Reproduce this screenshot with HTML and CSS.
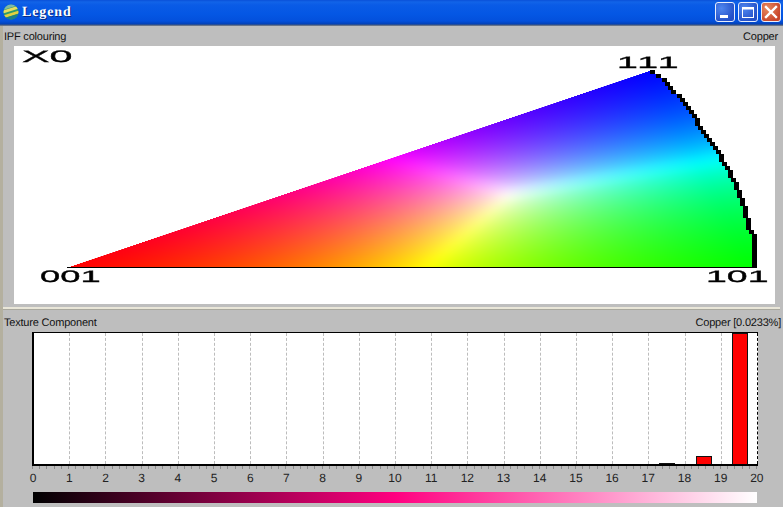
FILE: index.html
```html
<!DOCTYPE html>
<html lang="en">
<head>
<meta charset="utf-8">
<title>Legend</title>
<link rel="stylesheet" href="styles.css">
</head>
<body>
<div class="window">
  <header class="titlebar">
    <svg class="app-icon" viewBox="0 0 16 16" width="16" height="16">
      <defs><clipPath id="ball"><circle cx="8" cy="8" r="7.5"/></clipPath></defs>
      <circle cx="8" cy="8" r="7.5" fill="#2c9a6c"/>
      <g clip-path="url(#ball)">
        <path d="M0 0 H16 V1 L0 6Z" fill="#7fb8a8"/>
        <path d="M0 6.5 L16 1.5 V4.5 L0 9.5Z" fill="#e6dc60"/>
        <path d="M0 11.5 L16 6.5 V9.5 L0 14.5Z" fill="#e0d040"/>
        <path d="M0 14.5 L16 9.5 V16 H0Z" fill="#1c7f86"/>
      </g>
    </svg>
    <span class="title">Legend</span>
    <div class="controls">
      <button class="ctl ctl-min"><svg viewBox="0 0 20 20" width="20" height="20"><rect x="5" y="13" width="8" height="3" fill="#fff"/></svg></button>
      <button class="ctl ctl-max"><svg viewBox="0 0 20 20" width="20" height="20"><rect x="4.5" y="5.5" width="11" height="10" fill="none" stroke="#fff"/><rect x="4" y="5" width="12" height="2.5" fill="#fff"/></svg></button>
      <button class="ctl ctl-close"><svg viewBox="0 0 20 20" width="20" height="20"><path d="M5 5 L15 15 M15 5 L5 15" stroke="#fff" stroke-width="2.4" stroke-linecap="square"/></svg></button>
    </div>
  </header>
  <main class="content">
    <section class="panel panel-ipf">
      <div class="panel-head"><span>IPF colouring</span><span>Copper</span></div>
      <div class="map">
        <canvas id="ipf" width="761" height="258"></canvas>
        <span class="pole pole-x">X0</span>
        <span class="pole pole-111">111</span>
        <span class="pole pole-001">001</span>
        <span class="pole pole-101">101</span>
      </div>
    </section>
    <div class="splitter"></div>
    <section class="panel panel-tex">
      <div class="panel-head"><span>Texture Component</span><span>Copper [0.0233%]</span></div>
      <div class="plot">
        <div class="col"></div><div class="col"></div><div class="col"></div><div class="col"></div><div class="col"></div>
        <div class="col"></div><div class="col"></div><div class="col"></div><div class="col"></div><div class="col"></div>
        <div class="col"></div><div class="col"></div><div class="col"></div><div class="col"></div><div class="col"></div>
        <div class="col"></div><div class="col"></div>
        <div class="col"><div class="bar" style="height:1px"></div></div>
        <div class="col"><div class="bar" style="height:8px"></div></div>
        <div class="col col-last"><div class="bar" style="height:131px"></div></div>
      </div>
      <div class="ticks"></div>
      <div class="axis">
        <span>0</span><span>1</span><span>2</span><span>3</span><span>4</span><span>5</span><span>6</span>
        <span>7</span><span>8</span><span>9</span><span>10</span><span>11</span><span>12</span><span>13</span>
        <span>14</span><span>15</span><span>16</span><span>17</span><span>18</span><span>19</span><span>20</span>
      </div>
      <div class="scale"></div>
    </section>
  </main>
</div>
<script src="script.js"></script>
</body>
</html>
```
FILE: styles.css
```css
* { box-sizing: border-box; }
html, body { margin: 0; padding: 0; background: #bebebe; }
.window {
  width: 783px;
  height: 507px;
  display: flex;
  flex-direction: column;
  overflow: hidden;
  font-family: "Liberation Sans", Arial, sans-serif;
  font-size: 11px;
  text-rendering: geometricPrecision;
  color: #111;
}
.titlebar {
  height: 26px;
  flex: none;
  display: flex;
  align-items: center;
  padding: 0 2px 2px 3px;
  background: linear-gradient(#0a50d8 0, #1264e8 2px, #0a5be6 5px, #0457e4 14px, #0350dc 21px, #0342b8 24px, #44597f 25px, #8a8f96 26px);
}
.app-icon { flex: none; }
.title {
  margin: 2px 0 0 3px;
  font-family: "Liberation Serif", serif;
  font-weight: bold;
  font-size: 14px;
  letter-spacing: 0.9px;
  color: #fff;
  text-shadow: 1px 1px 0 #0a2a80;
}
.controls { margin-left: auto; display: flex; gap: 3px; }
.ctl {
  width: 20px;
  height: 20px;
  padding: 0;
  border: 1px solid #e8eefc;
  border-radius: 3px;
  background: radial-gradient(circle at 30% 30%, #4f86ee, #2450c8 75%);
  display: block;
}
.ctl svg { display: block; margin: -1px; }
.ctl-close { background: radial-gradient(circle at 30% 30%, #e88a60, #c8452a 75%); }
.content {
  flex: 1;
  display: flex;
  flex-direction: column;
  border-left: 3px solid #b4b09f;
  min-height: 0;
}
.panel-head {
  display: flex;
  justify-content: space-between;
  align-items: center;
  height: 20px;
  padding: 2px 2px 0 1px;
  letter-spacing: -0.2px;
}
.panel-ipf .panel-head { padding-right: 5px; }
.panel-ipf { height: 280px; flex: none; }
.map {
  position: relative;
  width: 761px;
  height: 258px;
  margin-left: 11px;
  background: #fff;
}
.map canvas { display: block; }
.pole {
  position: absolute;
  font-size: 16.5px;
  line-height: 14px;
  height: 14px;
  color: #000;
  -webkit-text-stroke: 0.3px #000;
  transform-origin: 0 0;
  transform: scaleX(2.27);
  white-space: nowrap;
}
.pole-x { left: 8px; top: 4px; transform: scaleX(2.5); }
.pole-111 { left: 603px; top: 10px; letter-spacing: 1px; }
.pole-001 { left: 26px; top: 224px; transform: scaleX(2.2); }
.pole-101 { left: 692px; top: 224px; }
.splitter {
  height: 6px;
  flex: none;
  width: 777px;
  background: linear-gradient(#bebebe 0, #bebebe 1px, #e9e6d8 1px, #e9e6d8 3px, #a9a89e 3px, #a9a89e 4px, #bebebe 4px);
}
.plot {
  display: flex;
  width: 726px;
  height: 134px;
  margin-left: 29px;
  background: #fff;
  border-top: 1px solid #000;
  border-left: 2px solid #000;
  border-bottom: 2px solid #000;
  align-items: stretch;
}
.col {
  flex: 1;
  border-right: 1px dashed #bcbcbc;
  display: flex;
  flex-direction: column;
  justify-content: flex-end;
  padding-left: 10px;
}
.col-last { border-right-color: #000; }
.bar {
  width: 16px;
  background: #f00;
  border: 1px solid #111;
  border-bottom: 0;
}
.ticks {
  height: 3px;
  width: 726px;
  margin-left: 29px;
  background: repeating-linear-gradient(90deg, #8c8c8c 0, #8c8c8c 1px, transparent 1px, transparent 7.24px);
}
.axis {
  display: grid;
  grid-template-columns: repeat(21, 36.2px);
  margin-left: 12px;
  height: 20px;
  margin-top: 2px;
  text-align: center;
  font-size: 12px;
  line-height: 15px;
  color: #222;
}
.scale {
  width: 724px;
  height: 11px;
  margin-left: 30px;
  margin-top: 1px;
  background: linear-gradient(90deg, #000 0, #ff0080 50%, #fff 100%);
}
```
FILE: script.js
```js
(function () {
  var canvas = document.getElementById('ipf');
  var ctx = canvas.getContext('2d');
  var W = canvas.width, H = canvas.height;
  var OX = 14, OY = 46;
  var img = ctx.createImageData(W, H);
  var R = [67, 267], G = [752, 267], B = [650, 70], C = [515, 195];
  var edge = [[70, 650], [80, 665], [102, 685], [135, 708], [150, 718], [170, 730], [190, 740], [210, 747], [232, 752], [233, 755], [267, 755]];

  function bary(x, y) {
    var d = (G[1] - B[1]) * (R[0] - B[0]) + (B[0] - G[0]) * (R[1] - B[1]);
    var a = ((G[1] - B[1]) * (x - B[0]) + (B[0] - G[0]) * (y - B[1])) / d;
    var b = ((B[1] - R[1]) * (x - B[0]) + (R[0] - B[0]) * (y - B[1])) / d;
    return [a, b, 1 - a - b];
  }
  function boundary(y) {
    for (var i = 0; i < edge.length - 1; i++) {
      if (y >= edge[i][0] && y <= edge[i + 1][0]) {
        var t = (y - edge[i][0]) / (edge[i + 1][0] - edge[i][0]);
        return edge[i][1] + t * (edge[i + 1][1] - edge[i][1]);
      }
    }
    return -1;
  }

  // colour field, extended past the triangle so the blur has no edge effects
  var c = bary(C[0], C[1]);
  c[1] *= 0.94;
  var field = new Float32Array(W * H * 3);
  var i, px, py, ch;
  for (py = 0; py < H; py++) {
    for (px = 0; px < W; px++) {
      var b0 = bary(px + OX, py + OY);
      var v = [Math.max(b0[0], 0) / c[0], Math.max(b0[1], 0) / c[1], Math.max(b0[2], 0) / c[2]];
      var m = Math.max(v[0], v[1], v[2]) || 1;
      i = (py * W + px) * 3;
      field[i] = 255 * v[0] / m;
      field[i + 1] = 255 * v[1] / m;
      field[i + 2] = 255 * v[2] / m;
    }
  }
  // separable box blur softens the ridges meeting at the white centre
  function blur(len, count, at, r) {
    var line = new Float32Array(len + 1);
    for (var n = 0; n < count; n++) {
      for (ch = 0; ch < 3; ch++) {
        line[0] = 0;
        for (var s = 0; s < len; s++) line[s + 1] = line[s] + field[at(n, s) + ch];
        for (s = 0; s < len; s++) {
          var a = Math.max(0, s - r), e = Math.min(len, s + r + 1);
          field[at(n, s) + ch] = (line[e] - line[a]) / (e - a);
        }
      }
    }
  }
  blur(W, H, function (n, s) { return (n * W + s) * 3; }, 7);
  blur(H, W, function (n, s) { return (s * W + n) * 3; }, 7);

  for (py = 0; py < H; py++) {
    for (px = 0; px < W; px++) {
      var x = px + OX, y = py + OY, k = (py * W + px) * 4;
      var col = [255, 255, 255];
      if (y >= 70 && y <= 267) {
        var leftX = R[0] + (267 - y) * (B[0] - R[0]) / 197;
        // the outer edge steps in coarse blocks, as the pixelated source does
        var by = 70 + Math.floor((y - 70) / 4) * 4;
        var right = Math.round(boundary(Math.min(by + 2, 267)) / 3) * 3 + 1;
        if (y === 267 && x >= R[0] && x < 755) {
          col = [0, 0, 0];
        } else if (x >= leftX && x < right) {
          if (x >= right - 5) {
            col = [0, 0, 0];
          } else {
            i = (py * W + px) * 3;
            col = [field[i], field[i + 1], field[i + 2]];
            var cov = x - leftX;
            if (cov < 1) { for (var j = 0; j < 3; j++) col[j] = 255 + (col[j] - 255) * cov; }
          }
        }
      }
      img.data[k] = col[0];
      img.data[k + 1] = col[1];
      img.data[k + 2] = col[2];
      img.data[k + 3] = 255;
    }
  }
  ctx.putImageData(img, 0, 0);
})();
```
